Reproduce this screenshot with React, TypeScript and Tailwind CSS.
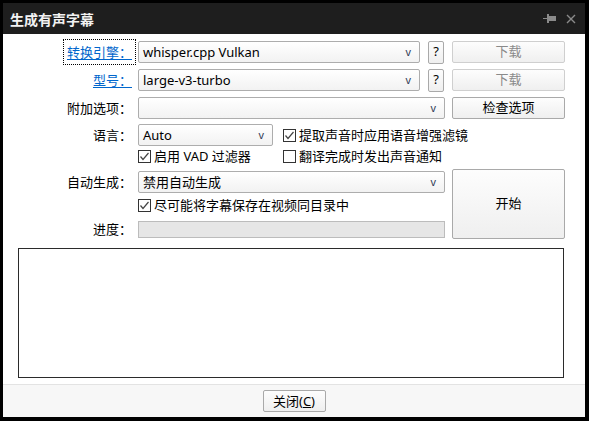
import React from 'react';

const Combo = ({ value, width }: { value?: string; width: string }) => (
  <div
    className={`${width} h-[22px] flex items-center justify-between pl-[4px] pr-[8px] border border-[#adadad] rounded-[2px] bg-linear-to-b from-white to-[#f2f2f2] text-black`}
  >
    <span className="leading-none">{value}</span>
    <span className="text-[11px] leading-none text-[#2f3b55] font-['Liberation_Sans',sans-serif]">v</span>
  </div>
);

const Button = ({
  children,
  disabled,
  className = '',
}: {
  children: React.ReactNode;
  disabled?: boolean;
  className?: string;
}) => (
  <button
    className={`flex items-center justify-center rounded-[2px] border bg-linear-to-b from-[#fdfdfd] to-[#efefef] ${
      disabled ? 'border-[#cfcfcf] text-[#8a8a8a]' : 'border-[#a9a9a9] text-black'
    } ${className}`}
  >
    {children}
  </button>
);

const Check = ({ checked, label }: { checked?: boolean; label: string }) => (
  <div className="flex items-center h-[16px] gap-[3px]">
    <div className="w-[13px] h-[13px] border border-[#333] bg-white flex items-center justify-center">
      {checked && (
        <svg width="11" height="11" viewBox="0 0 11 11">
          <polyline points="1.5,5.5 4,8.5 9.5,2" fill="none" stroke="#444" strokeWidth="1.2" />
        </svg>
      )}
    </div>
    <span className="leading-none whitespace-nowrap">{label}</span>
  </div>
);

const Label = ({ children }: { children: React.ReactNode }) => (
  <div className="w-[129px] shrink-0 text-right leading-none whitespace-nowrap">{children}</div>
);

export default function App() {
  return (
    <div className="w-[589px] h-[421px] bg-black pt-[3px] pl-[3px] pr-[4px] pb-[4px] flex flex-col text-[13px] font-['Noto_Sans','Noto_Sans_CJK_SC',sans-serif] text-black">
      {/* title bar */}
      <div className="h-[31px] bg-[#1e1e1e] flex items-center justify-between pl-[7px] pr-[9px]">
        <span className="text-[14px] font-bold text-[#f2f2f2] leading-none font-['Noto_Sans_CJK_SC',sans-serif]">
          生成有声字幕
        </span>
        <div className="flex items-center gap-[10px]">
          <svg width="13" height="9" viewBox="0 0 13 9">
            <rect x="0" y="4" width="4" height="1" fill="#8a8a8a" />
            <rect x="4" y="0" width="2" height="9" fill="#8a8a8a" />
            <rect x="6" y="2" width="7" height="5" fill="#8a8a8a" />
          </svg>
          <svg width="10" height="10" viewBox="0 0 10 10">
            <path d="M1 1 L9 9 M9 1 L1 9" stroke="#8a8a8a" strokeWidth="1.4" />
          </svg>
        </div>
      </div>

      {/* body */}
      <div className="flex-1 bg-white flex flex-col">
        <div className="mt-[7px] h-[22px] flex items-center">
          <Label>
            <span className="text-[#0066cc] underline underline-offset-2 outline-1 outline-dotted outline-black outline-offset-[3px]">
              转换引擎：
            </span>
          </Label>
          <div className="ml-[6px] flex items-center">
            <Combo width="w-[282px]" value="whisper.cpp Vulkan" />
            <Button className="ml-[8px] w-[16px] h-[23px] text-[13px]">?</Button>
            <Button disabled className="ml-[8px] w-[113px] h-[22px]">
              下载
            </Button>
          </div>
        </div>

        <div className="mt-[6px] h-[22px] flex items-center">
          <Label>
            <span className="text-[#0066cc] underline underline-offset-2">型号：</span>
          </Label>
          <div className="ml-[6px] flex items-center">
            <Combo width="w-[282px]" value="large-v3-turbo" />
            <Button className="ml-[8px] w-[16px] h-[23px] text-[13px]">?</Button>
            <Button disabled className="ml-[8px] w-[113px] h-[22px]">
              下载
            </Button>
          </div>
        </div>

        <div className="mt-[6px] h-[22px] flex items-center">
          <Label>附加选项：</Label>
          <div className="ml-[6px] flex items-center">
            <Combo width="w-[307px]" />
            <Button className="ml-[7px] w-[113px] h-[22px]">检查选项</Button>
          </div>
        </div>

        <div className="mt-[5px] h-[22px] flex items-center">
          <Label>语言：</Label>
          <div className="ml-[6px] flex items-center">
            <Combo width="w-[135px]" value="Auto" />
            <div className="ml-[10px]">
              <Check checked label="提取声音时应用语音增强滤镜" />
            </div>
          </div>
        </div>

        <div className="mt-[2px] h-[16px] flex items-center pl-[135px]">
          <div className="w-[145px]">
            <Check checked label="启用 VAD 过滤器" />
          </div>
          <Check label="翻译完成时发出声音通知" />
        </div>

        <div className="mt-[5px] flex items-start">
          <div className="flex flex-col">
            <div className="mt-[2px] h-[22px] flex items-center">
              <Label>自动生成：</Label>
              <div className="ml-[6px]">
                <Combo width="w-[307px]" value="禁用自动生成" />
              </div>
            </div>
            <div className="mt-[4px] h-[16px] flex items-center pl-[135px]">
              <Check checked label="尽可能将字幕保存在视频同目录中" />
            </div>
            <div className="mt-[8px] h-[17px] flex items-center">
              <Label>进度：</Label>
              <div className="ml-[6px] w-[307px] h-[17px] bg-[#e6e6e6] border border-[#bcbcbc]" />
            </div>
          </div>
          <Button className="ml-[7px] w-[113px] h-[70px]">开始</Button>
        </div>

        <div className="mt-[9px] ml-[15px] w-[546px] h-[130px] border border-[#2b2b2b] bg-white" />
      </div>

      {/* footer */}
      <div className="h-[33px] border-t border-[#e3e3e3] bg-[#f7f7f7] flex items-center justify-center">
        <Button className="w-[63px] h-[22px]">
          <span className="leading-none">
            关闭(<span className="underline">C</span>)
          </span>
        </Button>
      </div>
    </div>
  );
}
